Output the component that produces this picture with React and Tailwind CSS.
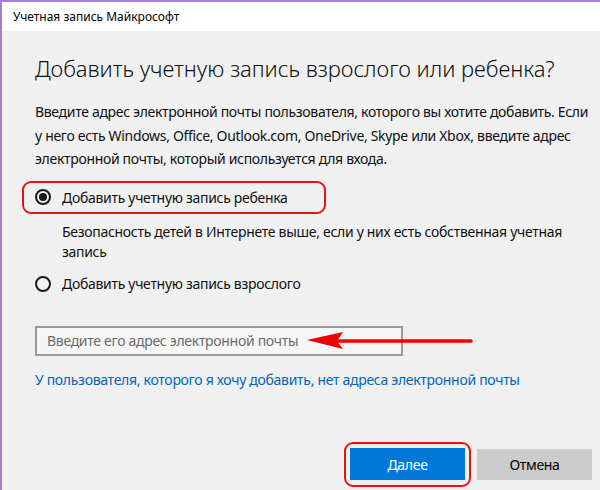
export default function App() {
  const font = { fontFamily: '"Noto Sans", "Open Sans", sans-serif' };

  return (
    <div
      className="w-[600px] h-[490px] overflow-hidden bg-[#f0f0f0] border-l-2 border-t-2 border-[#a27fd0] text-[#111]"
      style={font}
    >
      <div className="h-[29px] bg-white flex items-center pl-[11px] text-[12px] text-black">
        Учетная запись Майкрософт
      </div>

      <div className="pl-[33px] pr-[4px] text-[14px] tracking-[-0.3px]">
        <h1 className="mt-[22px] text-[22px] font-light leading-[30px] tracking-[-0.05px] whitespace-nowrap">
          Добавить учетную запись взрослого или ребенка?
        </h1>

        <p className="mt-[17px] leading-[23.5px] tracking-[-0.32px]">
          Введите адрес электронной почты пользователя, которого вы хотите добавить. Если у него есть
          Windows, Office, Outlook.com, OneDrive, Skype или Xbox, введите адрес электронной почты,
          который используется для входа.
        </p>

        <div className="mt-[10px] ml-[-13px] w-[304px] h-[33px] rounded-[9px] border-2 border-[#e8101a] flex items-center pl-[11px]">
          <Radio checked />
          <span className="ml-[11px]">Добавить учетную запись ребенка</span>
        </div>

        <p className="mt-[8px] ml-[27px] pr-[4px] leading-[20px]">
          Безопасность детей в Интернете выше, если у них есть собственная учетная запись
        </p>

        <div className="mt-[12px] flex items-center h-[20px]">
          <Radio />
          <span className="ml-[11px]">Добавить учетную запись взрослого</span>
        </div>

        <div className="relative mt-[32px] h-[30px]">
          <div className="w-[368px] h-[30px] border-2 border-[#9a9a9a] bg-[#f6f6f6] flex items-center pl-[10px] text-[#6b6b6b]">
            Введите его адрес электронной почты
          </div>
          <svg className="absolute left-[272px] top-[5px]" width="166" height="20" viewBox="0 0 166 20">
            <line x1="30" y1="10" x2="164" y2="10" stroke="#f20000" strokeWidth="3.5" strokeLinecap="round" />
            <polygon points="0,9 36,1 30,10 36,18" fill="#f20000" />
          </svg>
        </div>

        <div className="mt-[13px] text-[#0067b8]">
          У пользователя, которого я хочу добавить, нет адреса электронной почты
        </div>

        <div className="mt-[52px] flex items-center justify-end pr-[4px]">
          <div className="w-[127px] h-[45px] rounded-[9px] border-2 border-[#e8101a] flex items-center justify-center">
            <button className="w-[115px] h-[32px] bg-[#0078d7] text-white">Далее</button>
          </div>
          <button className="ml-[6px] w-[115px] h-[31px] bg-[#cccccc] text-black">Отмена</button>
        </div>
      </div>
    </div>
  );
}

function Radio({ checked }) {
  return (
    <span className="w-[16px] h-[16px] rounded-full border-2 border-[#1a1a1a] flex items-center justify-center shrink-0">
      {checked && <span className="w-[8px] h-[8px] rounded-full bg-[#1a1a1a]" />}
    </span>
  );
}
